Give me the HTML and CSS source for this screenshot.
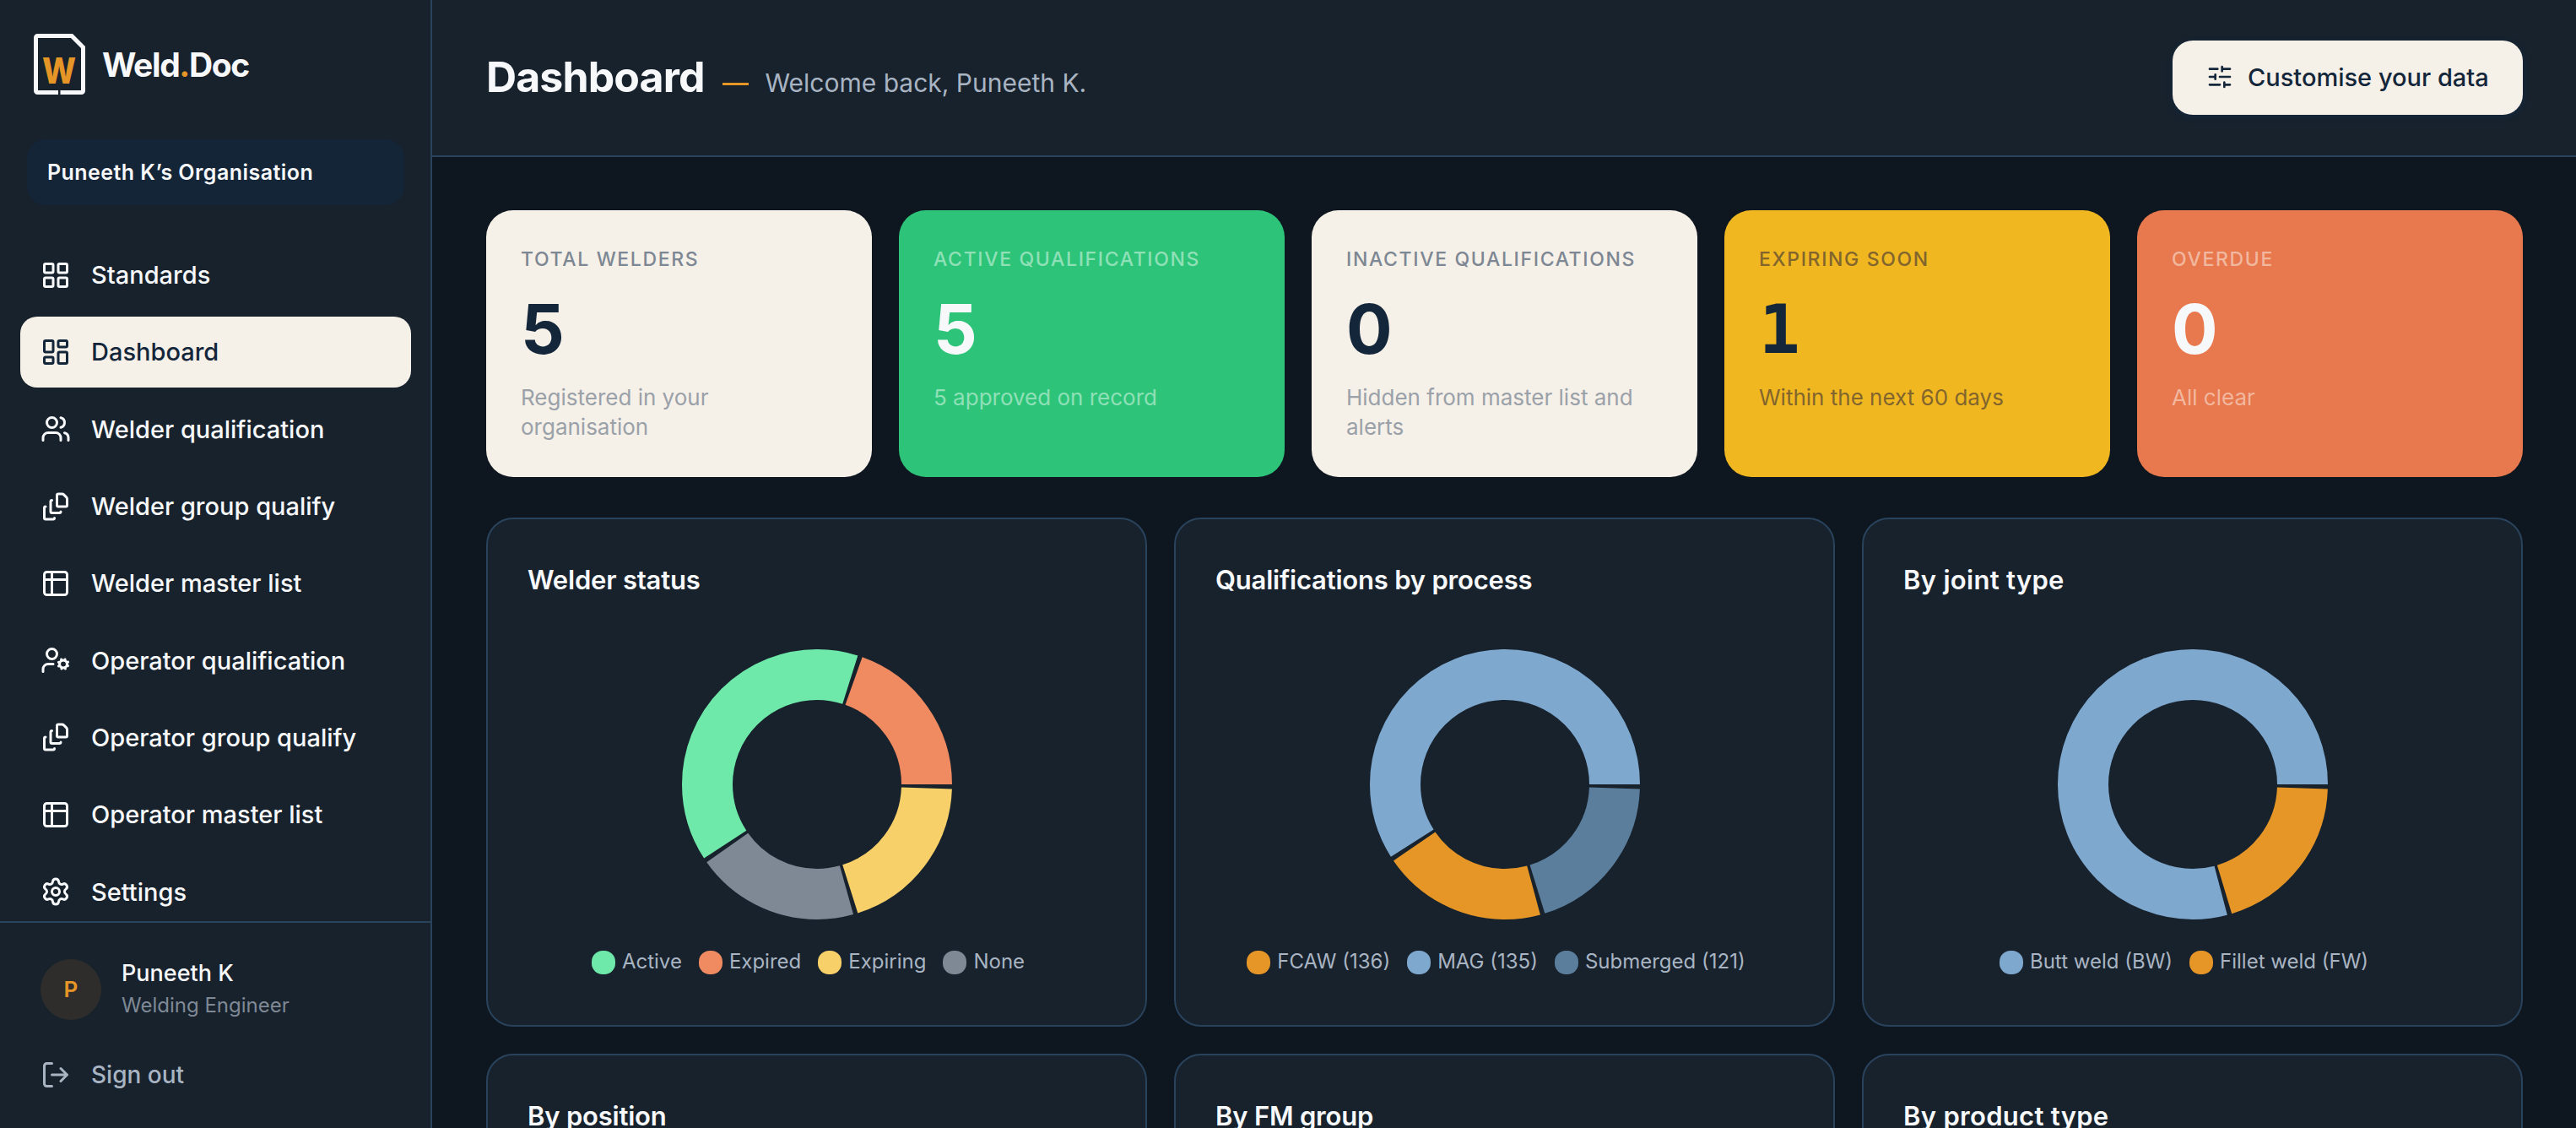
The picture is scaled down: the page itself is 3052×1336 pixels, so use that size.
FILE: index.html
```html
<!DOCTYPE html>
<html lang="en">

<head>
    <meta charset="UTF-8">
    <title>Weld.Doc - Dashboard</title>
    <link rel="stylesheet" href="styles.css">
</head>

<body>
    <aside class="sidebar">
        <div class="logo">
            <svg class="logo-mark" viewBox="0 0 61 72">
                <path d="M29 69.5H4.5a2 2 0 0 1-2-2v-63a2 2 0 0 1 2-2H45L58.500 16v51.500a2 2 0 0 1-2 2H31.500" fill="none" stroke="#f7f8fa" stroke-width="5" />
                <text class="logo-letter" x="10" y="59" textLength="40" lengthAdjust="spacingAndGlyphs">W</text>
            </svg>
            <span class="logo-text">Weld<span class="accent">.</span>Doc</span>
        </div>

        <div class="org">Puneeth K’s Organisation</div>

        <nav class="nav">
            <a class="nav-item">
                <svg class="icon" viewBox="0 0 24 24"><rect x="3" y="3" width="7" height="7" rx="1" /><rect x="14" y="3" width="7" height="7" rx="1" /><rect x="14" y="14" width="7" height="7" rx="1" /><rect x="3" y="14" width="7" height="7" rx="1" /></svg>
                Standards
            </a>
            <a class="nav-item active">
                <svg class="icon" viewBox="0 0 24 24"><rect x="3" y="3" width="7" height="9" rx="1" /><rect x="14" y="3" width="7" height="5" rx="1" /><rect x="14" y="12" width="7" height="9" rx="1" /><rect x="3" y="16" width="7" height="5" rx="1" /></svg>
                Dashboard
            </a>
            <a class="nav-item">
                <svg class="icon" viewBox="0 0 24 24"><path d="M16 21v-2a4 4 0 0 0-4-4H6a4 4 0 0 0-4 4v2M16 3.128a4 4 0 0 1 0 7.744M22 21v-2a4 4 0 0 0-3-3.870" /><circle cx="9" cy="7" r="4" /></svg>
                Welder qualification
            </a>
            <a class="nav-item">
                <svg class="icon" viewBox="0 0 24 24"><path d="M11 21a1 1 0 0 1-1 1H4a1 1 0 0 1-1-1v-8a1 1 0 0 1 1-1M16 16a1 1 0 0 1-1 1H9a1 1 0 0 1-1-1V8a1 1 0 0 1 1-1M21 6a2 2 0 0 0-.586-1.414l-2-2A2 2 0 0 0 17 2h-3a1 1 0 0 0-1 1v8a1 1 0 0 0 1 1h6a1 1 0 0 0 1-1z" /></svg>
                Welder group qualify
            </a>
            <a class="nav-item">
                <svg class="icon" viewBox="0 0 24 24"><rect x="3" y="3" width="18" height="18" rx="2" /><path d="M9 3v18M3 9h18" /></svg>
                Welder master list
            </a>
            <a class="nav-item">
                <svg class="icon" viewBox="0 0 24 24"><path d="M10 15H6a4 4 0 0 0-4 4v2M21.700 16.400l-.9-.3M15.200 13.900l-.9-.3M16.600 18.700l.3-.9M19.100 12.200l.3-.9M19.600 18.700l-.4-1M16.800 12.300l-.4-1M14.300 16.600l1-.4M20.700 13.800l1-.4" /><circle cx="18" cy="15" r="3" /><circle cx="9" cy="7" r="4" /></svg>
                Operator qualification
            </a>
            <a class="nav-item">
                <svg class="icon" viewBox="0 0 24 24"><path d="M11 21a1 1 0 0 1-1 1H4a1 1 0 0 1-1-1v-8a1 1 0 0 1 1-1M16 16a1 1 0 0 1-1 1H9a1 1 0 0 1-1-1V8a1 1 0 0 1 1-1M21 6a2 2 0 0 0-.586-1.414l-2-2A2 2 0 0 0 17 2h-3a1 1 0 0 0-1 1v8a1 1 0 0 0 1 1h6a1 1 0 0 0 1-1z" /></svg>
                Operator group qualify
            </a>
            <a class="nav-item">
                <svg class="icon" viewBox="0 0 24 24"><rect x="3" y="3" width="18" height="18" rx="2" /><path d="M9 3v18M3 9h18" /></svg>
                Operator master list
            </a>
            <a class="nav-item">
                <svg class="icon" viewBox="0 0 24 24"><path d="M9.671 4.136a2.340 2.340 0 0 1 4.659 0 2.340 2.340 0 0 0 3.319 1.915 2.340 2.340 0 0 1 2.330 4.033 2.340 2.340 0 0 0 0 3.831 2.340 2.340 0 0 1-2.330 4.033 2.340 2.340 0 0 0-3.319 1.915 2.340 2.340 0 0 1-4.659 0 2.340 2.340 0 0 0-3.320-1.915 2.340 2.340 0 0 1-2.330-4.033 2.340 2.340 0 0 0 0-3.831A2.340 2.340 0 0 1 6.350 6.051a2.340 2.340 0 0 0 3.319-1.915" /><circle cx="12" cy="12" r="3" /></svg>
                Settings
            </a>
        </nav>

        <div class="account">
            <div class="user">
                <div class="avatar">P</div>
                <div>
                    <div class="user-name">Puneeth K</div>
                    <div class="user-role">Welding Engineer</div>
                </div>
            </div>
            <a class="sign-out">
                <svg class="icon" viewBox="0 0 24 24"><path d="m16 17 5-5-5-5M21 12H9M9 21H5a2 2 0 0 1-2-2V5a2 2 0 0 1 2-2h4" /></svg>
                Sign out
            </a>
        </div>
    </aside>

    <main class="main">
        <header class="header">
            <div class="heading">
                <h1>Dashboard</h1>
                <span class="dash"></span>
                <span class="welcome">Welcome back, Puneeth K.</span>
            </div>
            <button class="customise">
                <svg class="icon" viewBox="0 0 24 24"><path d="M10 5H3M12 19H3M14 3v4M16 17v4M21 12h-9M21 19h-5M21 5h-7M8 10v4M8 12H3" /></svg>
                Customise your data
            </button>
        </header>

        <div class="content">
            <section class="stats">
                <div class="stat">
                    <div class="stat-label">Total welders</div>
                    <div class="stat-value">5</div>
                    <div class="stat-note">Registered in your organisation</div>
                </div>
                <div class="stat green">
                    <div class="stat-label">Active qualifications</div>
                    <div class="stat-value">5</div>
                    <div class="stat-note">5 approved on record</div>
                </div>
                <div class="stat">
                    <div class="stat-label">Inactive qualifications</div>
                    <div class="stat-value">0</div>
                    <div class="stat-note">Hidden from master list and alerts</div>
                </div>
                <div class="stat yellow">
                    <div class="stat-label">Expiring soon</div>
                    <div class="stat-value">1</div>
                    <div class="stat-note">Within the next 60 days</div>
                </div>
                <div class="stat orange">
                    <div class="stat-label">Overdue</div>
                    <div class="stat-value">0</div>
                    <div class="stat-note">All clear</div>
                </div>
            </section>

            <section class="charts">
                <div class="card">
                    <h2>Welder status</h2>
                    <!-- slices run counter-clockwise from 3 o'clock, with 2 degrees between them -->
                    <svg class="donut" viewBox="-160 -160 320 320">
                        <g transform="scale(1 -1)">
                            <circle class="s-expired" r="130" pathLength="360" stroke-dasharray="70.4 289.6" />
                            <circle class="s-active" r="130" pathLength="360" stroke-dasharray="140.8 219.2" stroke-dashoffset="-72.4" />
                            <circle class="s-none" r="130" pathLength="360" stroke-dasharray="70.4 289.6" stroke-dashoffset="-215.2" />
                            <circle class="s-expiring" r="130" pathLength="360" stroke-dasharray="70.4 289.6" stroke-dashoffset="-287.6" />
                        </g>
                    </svg>
                    <ul class="legend">
                        <li><i class="b-active"></i>Active</li>
                        <li><i class="b-expired"></i>Expired</li>
                        <li><i class="b-expiring"></i>Expiring</li>
                        <li><i class="b-none"></i>None</li>
                    </ul>
                </div>

                <div class="card">
                    <h2>Qualifications by process</h2>
                    <svg class="donut" viewBox="-160 -160 320 320">
                        <g transform="scale(1 -1)">
                            <circle class="s-blue" r="130" pathLength="360" stroke-dasharray="212.4 147.6" />
                            <circle class="s-amber" r="130" pathLength="360" stroke-dasharray="70.8 289.2" stroke-dashoffset="-214.4" />
                            <circle class="s-steel" r="130" pathLength="360" stroke-dasharray="70.8 289.2" stroke-dashoffset="-287.2" />
                        </g>
                    </svg>
                    <ul class="legend">
                        <li><i class="b-amber"></i>FCAW (136)</li>
                        <li><i class="b-blue"></i>MAG (135)</li>
                        <li><i class="b-steel"></i>Submerged (121)</li>
                    </ul>
                </div>

                <div class="card">
                    <h2 class="wide">By joint type</h2>
                    <svg class="donut" viewBox="-160 -160 320 320">
                        <g transform="scale(1 -1)">
                            <circle class="s-blue" r="130" pathLength="360" stroke-dasharray="284.8 75.2" />
                            <circle class="s-amber" r="130" pathLength="360" stroke-dasharray="71.2 288.8" stroke-dashoffset="-286.8" />
                        </g>
                    </svg>
                    <ul class="legend">
                        <li><i class="b-blue"></i>Butt weld (BW)</li>
                        <li><i class="b-amber"></i>Fillet weld (FW)</li>
                    </ul>
                </div>

                <div class="card">
                    <h2>By position</h2>
                </div>
                <div class="card">
                    <h2>By FM group</h2>
                </div>
                <div class="card">
                    <h2 class="wide">By product type</h2>
                </div>
            </section>
        </div>
    </main>
</body>

</html>
```

FILE: styles.css
```css
* {
    box-sizing: border-box;
}

body {
    font-family: Inter, "Liberation Sans", sans-serif;
    margin: 0;
    height: 1336px;
    display: flex;
    overflow: hidden;
    background-color: #0e161f;
    color: #f7f8fa;
}

.icon {
    width: 36px;
    height: 36px;
    flex: none;
    fill: none;
    stroke: currentColor;
    stroke-width: 2;
    stroke-linecap: round;
    stroke-linejoin: round;
}

/* Sidebar */
.sidebar {
    width: 512px;
    height: 100%;
    flex: none;
    display: flex;
    flex-direction: column;
    background-color: #17222d;
    border-right: 2px solid #2a435c;
}

.logo {
    display: flex;
    align-items: center;
    gap: 20px;
    padding: 40px 40px 0;
}

.logo-mark {
    width: 61px;
    height: 72px;
}

.logo-letter {
    font-size: 43px;
    font-weight: 800;
    fill: #e59627;
}

.logo-text {
    font-size: 39px;
    font-weight: 700;
    letter-spacing: -1.4px;
}

.accent {
    color: #e59627;
}

.org {
    margin: 53px 31px 0 32px;
    height: 78px;
    padding: 0 24px;
    line-height: 78px;
    border-radius: 22px;
    background-color: #142537;
    font-size: 25px;
    font-weight: 600;
    letter-spacing: 0.45px;
}

.nav {
    flex: 1;
    min-height: 0;
    overflow: hidden;
    display: flex;
    flex-direction: column;
    gap: 8px;
    margin-top: 41px;
    padding: 0 23px 0 24px;
}

.nav-item,
.sign-out {
    display: flex;
    align-items: center;
    gap: 24px;
    flex: none;
    height: 83.3px;
    padding: 0 24px;
    font-size: 29px;
    font-weight: 500;
}

.nav-item.active {
    background-color: #f5f0e8;
    color: #14263a;
    border-radius: 20px;
}

.account {
    height: 245px;
    flex: none;
    padding: 41px 24px 0;
    border-top: 2px solid #2a435c;
}

.user {
    display: flex;
    gap: 24px;
    align-items: center;
    padding: 0 24px;
}

.avatar {
    width: 72px;
    height: 72px;
    border-radius: 50%;
    background-color: #2e2d2b;
    color: #e59627;
    font-size: 26px;
    font-weight: 600;
    line-height: 72px;
    text-align: center;
}

.user-name {
    font-size: 27px;
    font-weight: 500;
    line-height: 38px;
}

.user-role {
    font-size: 24px;
    line-height: 38px;
    color: #7f8995;
}

.sign-out {
    margin-top: 21px;
    font-size: 28px;
    color: #a9b4c2;
}

/* Header */
.main {
    flex: 1;
    min-width: 0;
}

.header {
    height: 186px;
    display: flex;
    justify-content: space-between;
    align-items: flex-start;
    padding: 48px 63px 0 64px;
    background-color: #17222d;
    border-bottom: 2px solid #2a435c;
}

.heading {
    display: flex;
    align-items: baseline;
    padding-top: 12px;
}

h1 {
    margin: 0;
    font-size: 50px;
    font-weight: 700;
    line-height: 62px;
    letter-spacing: -0.9px;
}

.dash {
    width: 31px;
    height: 3px;
    align-self: flex-start;
    margin: 38px 20px 0 21px;
    background-color: #e59627;
}

.welcome {
    font-size: 30px;
    color: #a9b4c2;
}

.customise {
    width: 415px;
    height: 88px;
    display: flex;
    align-items: center;
    gap: 17px;
    padding: 0 0 2px 40px;
    border: none;
    border-radius: 24px;
    background-color: #f5f0e8;
    box-shadow: 0 2px 6px #152941;
    color: #14263a;
    font-family: inherit;
    font-size: 29px;
    font-weight: 500;
    white-space: nowrap;
}

.customise .icon {
    width: 32px;
    height: 32px;
}

/* Stat tiles */
.content {
    padding: 63px 63px 0 64px;
}

.stats {
    display: grid;
    grid-template-columns: repeat(5, 1fr);
    gap: 32px;
}

.stat {
    height: 316px;
    padding: 41px 41px 0;
    border-radius: 32px;
    background-color: #f5f0e8;
    color: #14263a;
}

.stat-label {
    font-size: 23px;
    font-weight: 500;
    line-height: 34px;
    letter-spacing: 1.650px;
    text-transform: uppercase;
    white-space: nowrap;
    color: #7d8793;
}

.stat-value {
    margin-top: 24px;
    font-size: 81px;
    font-weight: 700;
    line-height: 84px;
}

.stat-note {
    margin-top: 21px;
    font-size: 26px;
    line-height: 35.300px;
    color: #9aa1a9;
}

.green {
    background-color: #2dc47a;
    color: #f7f8fa;
}

.green .stat-label,
.green .stat-note {
    color: #8fe0b6;
}

.yellow {
    background-color: #f0b721;
}

/* needs a figure one with a foot */
.yellow .stat-value {
    font-family: "DejaVu Sans Mono", monospace;
}

.yellow .stat-label,
.yellow .stat-note {
    color: #82652d;
}

.orange {
    background-color: #e8784d;
    color: #f7f8fa;
}

.orange .stat-label,
.orange .stat-note {
    color: #f2b79f;
}

/* Charts */
.charts {
    display: grid;
    grid-template-columns: repeat(3, 1fr);
    gap: 32px;
    margin-top: 48px;
}

.card {
    height: 603px;
    padding: 48px 47px;
    border: 2px solid #2a435c;
    border-radius: 32px;
    background-color: #17222d;
}

h2 {
    margin: 0;
    font-size: 31px;
    font-weight: 600;
    line-height: 48px;
    letter-spacing: -0.2px;
}

h2.wide {
    letter-spacing: 0.3px;
}

.donut {
    display: block;
    width: 320px;
    height: 320px;
    margin: 57.500px auto 0;
}

.donut circle {
    fill: none;
    stroke-width: 60;
}

.donut .s-active { stroke: #6fe9a9; }
.donut .s-expired { stroke: #f08a60; }
.donut .s-expiring { stroke: #f7d06a; }
.donut .s-none { stroke: #7f8995; }
.donut .s-blue { stroke: #7fa8cf; }
.donut .s-amber { stroke: #e59627; }
.donut .s-steel { stroke: #5b7e9c; }

.b-active { background-color: #6fe9a9; }
.b-expired { background-color: #f08a60; }
.b-expiring { background-color: #f7d06a; }
.b-none { background-color: #7f8995; }
.b-blue { background-color: #7fa8cf; }
.b-amber { background-color: #e59627; }
.b-steel { background-color: #5b7e9c; }

.legend {
    display: flex;
    justify-content: center;
    margin: 31px 0 0;
    padding: 0;
    list-style: none;
    font-size: 24px;
    line-height: 38px;
    color: #a9b4c2;
    white-space: nowrap;
}

.legend li {
    display: flex;
    margin-right: 20px;
}

.legend i {
    width: 28px;
    height: 28px;
    margin: 6px 8px 0 0;
    border-radius: 13px;
}
```
